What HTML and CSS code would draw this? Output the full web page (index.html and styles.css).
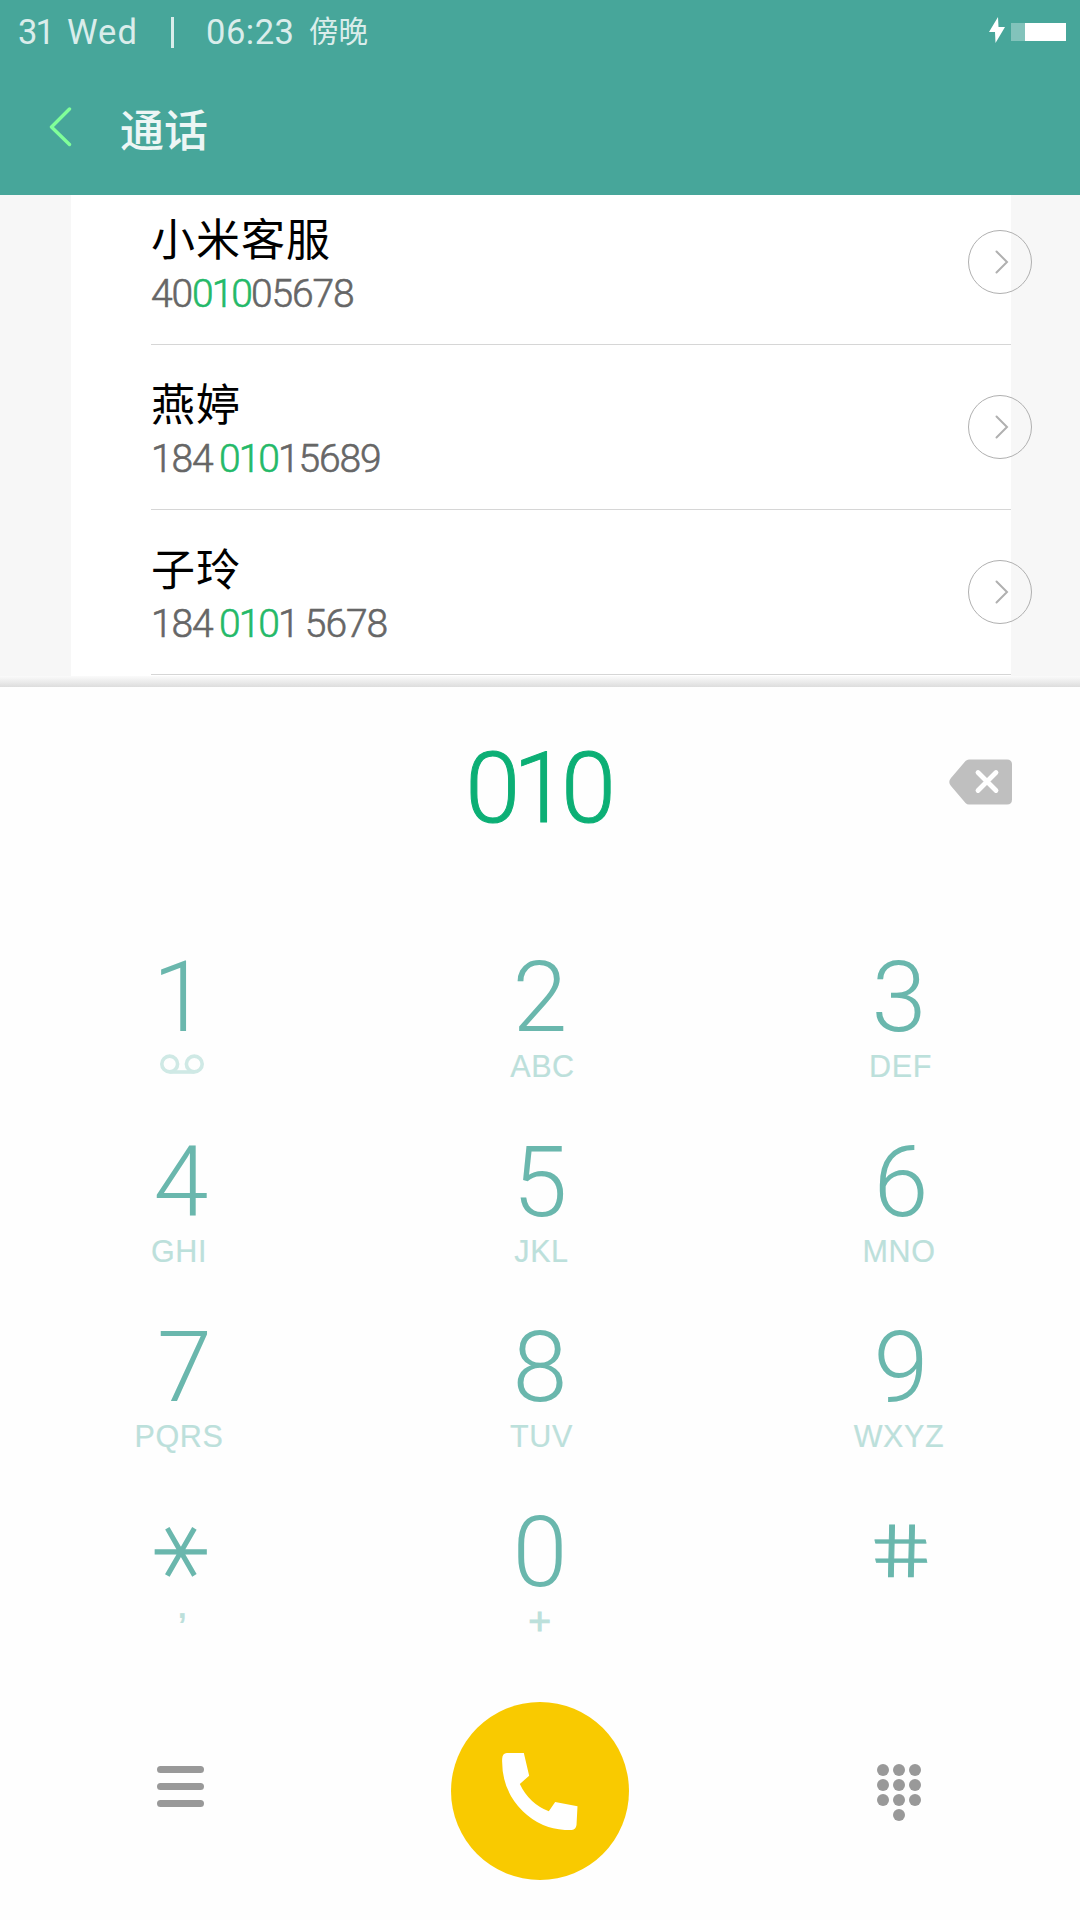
FILE: index.html
```
<!DOCTYPE html>
<html lang="zh-CN">
<head>
  <meta charset="UTF-8">
  <title>通话</title>
  <link rel="stylesheet" href="styles.css">
</head>
<body>
  <header class="header">
    <div class="status-bar">
      <span class="day">31</span>
      <span class="week">Wed</span>
      <span class="separator"></span>
      <span class="time">06:23</span>
      <span class="period">傍晚</span>
      <div class="battery">
        <svg width="16" height="26" viewBox="0 0 16 26"><path d="M9 0 0 15H6L6.500 26 16 10H9.500Z" fill="#fff"/></svg>
        <div class="battery-level"></div>
      </div>
    </div>
    <div class="title-bar">
      <svg class="back" width="24" height="40" viewBox="0 0 24 40"><path d="M21.500 2 3.500 20 21.500 37.500" fill="none" stroke="#80ff99" stroke-width="3.400" stroke-linecap="round" stroke-linejoin="round"/></svg>
      <h1>通话</h1>
    </div>
  </header>

  <main class="results">
    <div class="list">
      <div class="contact">
        <div class="info">
          <div class="name">小米客服</div>
          <div class="number">40<em>010</em>05678</div>
        </div>
        <div class="detail"><svg width="14" height="24" viewBox="0 0 14 24"><path d="M1.500 1.500 12 12 1.500 22.500"/></svg></div>
      </div>
      <div class="contact">
        <div class="info">
          <div class="name">燕婷</div>
          <div class="number">184 <em>010</em>15689</div>
        </div>
        <div class="detail"><svg width="14" height="24" viewBox="0 0 14 24"><path d="M1.500 1.500 12 12 1.500 22.500"/></svg></div>
      </div>
      <div class="contact">
        <div class="info">
          <div class="name">子玲</div>
          <div class="number">184 <em>010</em>1 5678</div>
        </div>
        <div class="detail"><svg width="14" height="24" viewBox="0 0 14 24"><path d="M1.500 1.500 12 12 1.500 22.500"/></svg></div>
      </div>
    </div>
    <div class="shadow"></div>
  </main>

  <section class="dialer">
    <div class="display">
      <div class="typed">010</div>
      <svg class="delete" width="63" height="46" viewBox="0 0 63 46">
        <path d="M20 .5H58Q63 .5 63 5.500V40.500Q63 45.500 58 45.500H20Q18 45.500 16.500 44L2 27Q-1.500 23 2 19L16.500 2Q18 .5 20 .5Z" fill="#bfbfbf"/>
        <path d="M29 13.500 47 31.500M47 13.500 29 31.500" stroke="#fff" stroke-width="4.800" stroke-linecap="round"/>
      </svg>
    </div>

    <div class="keypad">
      <div class="key"><span class="digit one">1</span>
        <svg class="voicemail" width="44" height="20" viewBox="0 0 44 20"><g fill="none" stroke="#cfe9e5" stroke-width="3.600"><circle cx="9.700" cy="10" r="7.900"/><circle cx="34.300" cy="10" r="7.900"/><path d="M9.700 18H34.300"/></g></svg>
      </div>
      <div class="key"><span class="digit">2</span><span class="letters abc">ABC</span></div>
      <div class="key"><span class="digit">3</span><span class="letters def">DEF</span></div>
      <div class="key"><span class="digit">4</span><span class="letters ghi">GHI</span></div>
      <div class="key"><span class="digit">5</span><span class="letters def">JKL</span></div>
      <div class="key"><span class="digit six">6</span><span class="letters">MNO</span></div>
      <div class="key"><span class="digit seven">7</span><span class="letters ghi">PQRS</span></div>
      <div class="key"><span class="digit">8</span><span class="letters def">TUV</span></div>
      <div class="key"><span class="digit six">9</span><span class="letters">WXYZ</span></div>
      <div class="key"><span class="digit"><span class="star">*</span></span><span class="letters comma">,</span></div>
      <div class="key"><span class="digit">0</span><span class="letters plus">+</span></div>
      <div class="key"><span class="digit"><span class="hash">#</span></span></div>
    </div>

    <div class="actions">
      <div class="action menu">
        <svg width="47" height="41" viewBox="0 0 47 41"><path d="M3.500 3.500H43.500M3.500 20.500H43.500M3.500 37.500H43.500" stroke="#999" stroke-width="7" stroke-linecap="round"/></svg>
      </div>
      <div class="action">
        <div class="call">
          <svg width="76" height="77" viewBox="1116 189 227 231"><path d="M1130 189H1181L1197 257 1169 282Q1197 341 1256 364L1275 336 1342 349 1339 405Q1337 419 1325 420Q1240 424 1178 364Q1113 300 1116 206Q1117 190 1130 189Z" fill="#fff"/></svg>
        </div>
      </div>
      <div class="action pad">
        <svg width="44" height="58" viewBox="0 0 44 58">
          <g fill="#999">
            <circle cx="6" cy="6" r="6"/><circle cx="22" cy="6" r="6"/><circle cx="38" cy="6" r="6"/>
            <circle cx="6" cy="21" r="6"/><circle cx="22" cy="21" r="6"/><circle cx="38" cy="21" r="6"/>
            <circle cx="6" cy="36" r="6"/><circle cx="22" cy="36" r="6"/><circle cx="38" cy="36" r="6"/>
            <circle cx="22" cy="51" r="6"/>
          </g>
        </svg>
      </div>
    </div>
  </section>
</body>
</html>
```
FILE: styles.css
```
* {
  box-sizing: border-box;
}

body {
  margin: 0;
  width: 1080px;
  height: 1920px;
  overflow: hidden;
  background: #fefefe;
  font-family: Roboto, "Noto Sans CJK SC", sans-serif;
}

svg {
  display: block;
}

.header {
  height: 195px;
  background: #47a69a;
  color: #daedeb;
}

.status-bar {
  display: flex;
  align-items: center;
  height: 64px;
  padding: 0 14px 0 18px;
  font-size: 34.5px;
  line-height: 63px;
}

.day {
  width: 49px;
  letter-spacing: -2px;
}

.week {
  width: 104px;
  letter-spacing: 1px;
}

.separator {
  width: 3px;
  height: 31px;
  margin-right: 32px;
  background: #daedeb;
}

.time {
  width: 103px;
  letter-spacing: 0.5px;
}

.period {
  font-size: 29.5px;
}

.battery {
  display: flex;
  align-items: center;
  gap: 6px;
  margin: -4px 0 0 auto;
}

.battery-level {
  width: 55px;
  height: 18px;
  margin-top: 4px;
  background: linear-gradient(to right, #82c3bb 14px, #fff 14px);
}

.title-bar {
  display: flex;
  align-items: center;
  height: 131px;
  padding: 0 0 3px 48px;
}

.back {
  margin-top: -2px;
}

h1 {
  margin: 8px 0 0 48px;
  color: #edf6f5;
  font-size: 44px;
  font-weight: 500;
  line-height: 64px;
}

.results {
  height: 492px;
  background: #f7f7f7;
}

.list {
  width: 940px;
  height: 481px;
  margin-left: 71px;
  padding-left: 80px;
  background: #fff;
}

.contact {
  display: flex;
  justify-content: space-between;
  width: 860px;
  height: 165px;
  border-bottom: 1px solid #d6d6d6;
}

.contact:first-child {
  height: 150px;
}

.contact:first-child .info {
  margin-top: 15px;
}

.contact:first-child .detail {
  margin-top: 35px;
}

.info {
  margin-top: 30px;
}

.name {
  color: #000;
  font-size: 44px;
  letter-spacing: 1px;
  line-height: 62px;
}

.number {
  margin-top: -3px;
  color: #666;
  font-size: 39px;
  font-weight: 300;
  letter-spacing: -1.1px;
  word-spacing: -2px;
  line-height: 50px;
  -webkit-text-stroke: 0.6px;
}

.number em {
  color: #24b968;
  font-style: normal;
  letter-spacing: -2px;
}

.detail {
  display: flex;
  align-items: center;
  justify-content: center;
  width: 64px;
  height: 64px;
  margin: 50px -21px 0 0;
  padding-left: 4px;
  border: 1px solid #b0b0b0;
  border-radius: 50%;
}

.detail path {
  fill: none;
  stroke: #b0b0b0;
  stroke-width: 2;
  stroke-linecap: round;
}

.shadow {
  height: 11px;
  background: linear-gradient(#fbfbfb, #ddd);
}

.display {
  display: flex;
  align-items: center;
  height: 200px;
  padding: 0 68px 0 125px;
}

.typed {
  flex: 1;
  margin-top: 2px;
  color: #0caf75;
  font-size: 99px;
  font-weight: 300;
  letter-spacing: -7px;
  text-align: center;
  -webkit-text-stroke: 1px;
}

.delete {
  margin-top: -10px;
}

.keypad {
  display: grid;
  grid-template-columns: repeat(3, 359px);
  grid-auto-rows: 185px;
  justify-content: center;
  padding-top: 60px;
}

.key {
  display: flex;
  flex-direction: column;
  align-items: center;
}

.digit {
  height: 100px;
  color: #6ab7ad;
  font-size: 99px;
  font-weight: 300;
  line-height: 100px;
}

.one {
  padding-right: 2px;
}

.six {
  padding-left: 4px;
}

.seven {
  padding-left: 7px;
}

.letters {
  margin-top: 1px;
  color: #bce0db;
  font-family: "Liberation Sans", sans-serif;
  font-size: 30.5px;
  letter-spacing: 0.6px;
  line-height: 36px;
  -webkit-text-stroke: 0.2px #bce0db;
}

.abc {
  padding-left: 5px;
}

.def {
  padding-left: 3px;
}

.ghi {
  padding-right: 4px;
}

.voicemail {
  margin: 7px 0 0 2px;
}

.comma {
  margin-top: -13px;
  padding-left: 3px;
  font-weight: bold;
}

.plus {
  font-size: 39px;
  -webkit-text-stroke: 1px #bce0db;
}

.star {
  display: block;
  font-family: "DejaVu Sans", sans-serif;
  font-weight: 200;
  transform: translate(-18px, 0) rotate(90deg) scale(1.1);
  -webkit-text-stroke: 2.4px #6ab7ad;
}

.hash {
  display: block;
  transform: skewX(13deg) scaleY(0.74);
  -webkit-text-stroke: 1px #6ab7ad;
}

.actions {
  display: grid;
  grid-template-columns: repeat(3, 359px);
  justify-content: center;
  padding-top: 15px;
}

.action {
  display: flex;
  justify-content: center;
}

.menu {
  padding: 64px 2px 0 0;
}

.pad {
  padding-top: 62px;
}

.call {
  display: flex;
  align-items: center;
  justify-content: center;
  width: 178px;
  height: 178px;
  border-radius: 50%;
  background: #f9ca00;
}
```
